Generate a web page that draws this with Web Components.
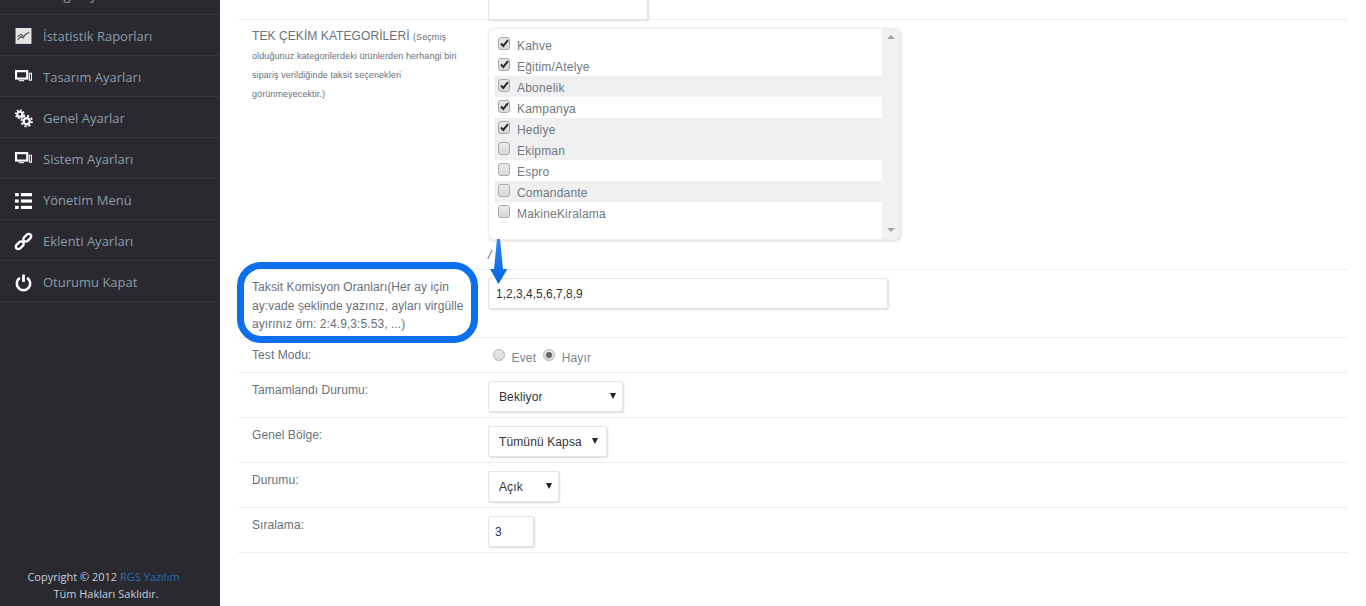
<!DOCTYPE html>
<html lang="tr">
<head>
<meta charset="utf-8">
<title>Ayarlar</title>
<style>
  html, body { margin: 0; height: 606px; overflow: hidden; background: #fff; }
</style>
</head>
<body>
<admin-page>
  <admin-sidebar slot="side">
    <nav-item label="Kargo Ayarları" icon="truck"></nav-item>
    <nav-item label="İstatistik Raporları" icon="chart"></nav-item>
    <nav-item label="Tasarım Ayarları" icon="devices"></nav-item>
    <nav-item label="Genel Ayarlar" icon="gears"></nav-item>
    <nav-item label="Sistem Ayarları" icon="devices"></nav-item>
    <nav-item label="Yönetim Menü" icon="list"></nav-item>
    <nav-item label="Eklenti Ayarları" icon="link"></nav-item>
    <nav-item label="Oturumu Kapat" icon="power"></nav-item>
  </admin-sidebar>

  <form-row style="height:45px">
    <text-field style="width:160px;margin-top:7px"></text-field>
  </form-row>

  <form-row style="height:249px">
    <span slot="label" style="display:block;line-height:19px">TEK ÇEKİM KATEGORİLERİ <small style="font-size:9px;line-height:18px;letter-spacing:.01em">(Seçmiş olduğunuz kategorilerdeki ürünlerden herhangi biri sipariş verildiğinde taksit seçenekleri görünmeyecektir.)</small></span>
    <check-list>
      <check-item checked>Kahve</check-item>
      <check-item checked>Eğitim/Atelye</check-item>
      <check-item checked odd>Abonelik</check-item>
      <check-item checked>Kampanya</check-item>
      <check-item checked odd>Hediye</check-item>
      <check-item odd>Ekipman</check-item>
      <check-item>Espro</check-item>
      <check-item odd>Comandante</check-item>
      <check-item>MakineKiralama</check-item>
    </check-list>
    <div style="font:italic 12px 'Liberation Sans',Arial,sans-serif;color:#666;margin-top:8px">/</div>
  </form-row>

  <form-row style="height:67px">
    <span slot="label" style="display:block;line-height:18.5px;margin-top:1px">Taksit Komisyon Oranları(Her ay için ay:vade şeklinde yazınız, ayları virgülle ayırınız örn: 2:4.9,3:5.53, ...)</span>
    <text-field style="width:400px">1,2,3,4,5,6,7,8,9</text-field>
  </form-row>

  <form-row style="height:34px" tight>
    <span slot="label">Test Modu:</span>
    <radio-group>
      <radio-option>Evet</radio-option>
      <radio-option checked>Hayır</radio-option>
    </radio-group>
  </form-row>

  <form-row style="height:44px">
    <span slot="label">Tamamlandı Durumu:</span>
    <select-field style="width:135px">Bekliyor</select-field>
  </form-row>

  <form-row style="height:44px">
    <span slot="label">Genel Bölge:</span>
    <select-field style="width:119px" arrow-right="8">Tümünü Kapsa</select-field>
  </form-row>

  <form-row style="height:44px">
    <span slot="label">Durumu:</span>
    <select-field style="width:71px">Açık</select-field>
  </form-row>

  <form-row style="height:44px">
    <span slot="label">Sıralama:</span>
    <text-field style="width:46px;color:#1c2f66;padding-left:6px">3</text-field>
  </form-row>

  <!-- annotation drawn over the screenshot -->
  <call-out slot="overlay"></call-out>
</admin-page>

<script>
const ICONS = {
  truck: `<rect x="0" y="-13" width="16" height="16" fill="#fff"/><circle cx="11" cy="1" r="2" fill="#2a2a31"/>`,
  chart: `<rect x="0.5" y="0" width="15" height="15" fill="#e4e4e4"/><path d="M2.5 11l3-3 2 1.5 2.5-3.5 3.5-2M2.5 8l3-2 2.5 2 2-2.5 3-1" fill="none" stroke="#55555a" stroke-width="1"/>`,
  devices: `<rect x="1" y="2" width="10.5" height="7" fill="none" stroke="#fff" stroke-width="2"/><rect x="3.5" y="10.5" width="5" height="1" fill="#fff"/><rect x="13.5" y="4" width="2" height="6.5" fill="none" stroke="#fff" stroke-width="1"/>`,
  gears: `<circle cx="4.5" cy="4" r="2.4" fill="none" stroke="#fff" stroke-width="2"/><circle cx="4.5" cy="4" r="4" fill="none" stroke="#fff" stroke-width="1.4" stroke-dasharray="1.6 1.5"/><circle cx="11" cy="10.5" r="2.9" fill="none" stroke="#fff" stroke-width="2.2"/><circle cx="11" cy="10.5" r="5" fill="none" stroke="#fff" stroke-width="1.6" stroke-dasharray="2 1.9"/>`,
  list: `<g fill="#fff"><rect x="0" y="1" width="3.5" height="3"/><rect x="5.5" y="1" width="10.5" height="3"/><rect x="0" y="7" width="3.5" height="3"/><rect x="5.5" y="7" width="10.5" height="3"/><rect x="0" y="13" width="3.5" height="3"/><rect x="5.5" y="13" width="10.5" height="3"/></g>`,
  link: `<g fill="none" stroke="#fff" stroke-width="2.2"><rect x="-5" y="-2.4" width="8.5" height="4.8" rx="2.4" transform="translate(5 11) rotate(-45)"/><rect x="-3.5" y="-2.4" width="8.5" height="4.8" rx="2.4" transform="translate(11 5) rotate(-45)"/></g>`,
  power: `<path d="M4.6 3.6a6.3 6.3 0 1 0 6.8 0" fill="none" stroke="#fff" stroke-width="2.4"/><path d="M8 0.5v7" stroke="#fff" stroke-width="2.6"/>`
};

class AdminPage extends HTMLElement {
  constructor() {
    super();
    this.attachShadow({ mode: 'open' }).innerHTML = `
      <style>
        :host { display: flex; position: relative; height: 632px; margin-top: -26px; font-family: "Liberation Sans", Arial, sans-serif; }
        #side { flex: 0 0 220px; display: flex; }
        #main { flex: 1; padding: 0 19px 0 18px; }
      </style>
      <div id="side"><slot name="side"></slot></div>
      <div id="main"><slot></slot></div>
      <slot name="overlay"></slot>`;
  }
}

class AdminSidebar extends HTMLElement {
  constructor() {
    super();
    this.attachShadow({ mode: 'open' }).innerHTML = `
      <style>
        :host { flex: 1; display: flex; flex-direction: column; background: #29292f; font-family: "Open Sans", sans-serif; }
        footer { margin-top: auto; padding: 0 11px 4px 0; text-align: center; font-size: 11px; line-height: 17px; color: #c3d0dc; }
        a { color: #2a6cb3; text-decoration: none; }
        .second { padding-left: 3px; }
        .first { padding-right: 2px; }
      </style>
      <slot></slot>
      <footer>
        <div class="first">Copyright © 2012 <a>RGS Yazılım</a></div>
        <div class="second">Tüm Hakları Saklıdır.</div>
      </footer>`;
  }
}

class NavItem extends HTMLElement {
  constructor() {
    super();
    const icon = ICONS[this.getAttribute('icon')] || '';
    this.attachShadow({ mode: 'open' }).innerHTML = `
      <style>
        :host { display: flex; align-items: center; gap: 11px; height: 38px; padding: 2px 0 0 15px; border-bottom: 1px solid #35353b; color: #8c9cab; font-size: 13px; }
        svg { width: 17px; height: 17px; flex: none; overflow: visible; }
      </style>
      <svg viewBox="0 0 16 16">${icon}</svg>
      <span>${this.getAttribute('label')}</span>`;
  }
}

class FormRow extends HTMLElement {
  constructor() {
    super();
    this.attachShadow({ mode: 'open' }).innerHTML = `
      <style>
        :host { display: grid; grid-template-columns: 236px 1fr; box-sizing: content-box; padding-left: 14px; border-bottom: 1px dotted #dcdcdc; color: #69717b; font-size: 12px; line-height: 21px; }
        #label { width: 214px; padding-top: 7px; letter-spacing: .08px; }
        #field { padding-top: 8px; }
        :host([tight]) #field { padding-top: 0; }
      </style>
      <div id="label"><slot name="label"></slot></div>
      <div id="field"><slot></slot></div>`;
  }
}

class TextField extends HTMLElement {
  constructor() {
    super();
    this.attachShadow({ mode: 'open' }).innerHTML = `
      <style>
        :host { display: block; box-sizing: border-box; height: 31px; padding: 0 7px; border: 1px solid #e4e4e4; border-radius: 2px; box-shadow: 1px 1px 2px rgba(0,0,0,.14); background: #fff; color: #333; font-size: 12px; line-height: 31px; }
      </style>
      <slot></slot>`;
  }
}

class SelectField extends HTMLElement {
  constructor() {
    super();
    const right = this.getAttribute('arrow-right') || 6;
    this.attachShadow({ mode: 'open' }).innerHTML = `
      <style>
        :host { display: flex; align-items: center; justify-content: space-between; box-sizing: border-box; height: 31px; padding: 0 ${right}px 0 10px; border: 1px solid #e4e4e4; border-radius: 2px; box-shadow: 1px 1px 2px rgba(0,0,0,.14); background: #fff; color: #333; font-size: 12px; letter-spacing: .12px; }
        span { padding-top: 2px; }
        i { width: 0; height: 0; margin-top: -1px; border: 3.5px solid transparent; border-top: 6px solid #222; border-bottom: 0; }
      </style>
      <span><slot></slot></span><i></i>`;
  }
}

class CheckList extends HTMLElement {
  constructor() {
    super();
    this.attachShadow({ mode: 'open' }).innerHTML = `
      <style>
        :host { display: flex; box-sizing: border-box; width: 412px; height: 212px; border: 1px solid #eee; border-radius: 5px; box-shadow: 1px 1px 3px rgba(0,0,0,.16); overflow: hidden; background: #fff; }
        #items { flex: 1; padding: 5px 0 0 5px; }
        #bar { flex: 0 0 17px; display: flex; flex-direction: column; justify-content: space-between; align-items: center; padding: 6px 0 7px; background: #f1f1f1; }
        .up, .down { width: 0; height: 0; border: 4px solid transparent; }
        .up { border-bottom: 4px solid #a3a3a3; border-top: 0; }
        .down { border-top: 4px solid #a3a3a3; border-bottom: 0; }
      </style>
      <div id="items"><slot></slot></div>
      <div id="bar"><div class="up"></div><div class="down"></div></div>`;
  }
}

class CheckItem extends HTMLElement {
  constructor() {
    super();
    this.attachShadow({ mode: 'open' }).innerHTML = `
      <style>
        :host { display: flex; height: 21px; padding-left: 4px; color: #6f7883; font-size: 12px; letter-spacing: .2px; line-height: 25px; }
        :host([odd]) { background: #f0f0f0; }
        #box { position: relative; box-sizing: border-box; flex: none; width: 12px; height: 13px; margin: 3px 7px 0 0; border: 1px solid #a9a9a9; border-radius: 3px; background: linear-gradient(#e9e9e9, #d8d8d8); }
        svg { display: none; position: absolute; left: 0; top: 0; width: 11px; height: 11px; }
        :host([checked]) svg { display: block; }
      </style>
      <div id="box"><svg viewBox="0 0 11 11"><path d="M2 5.500l2.3 2.500L9 2.200" fill="none" stroke="#2a2a2a" stroke-width="2"/></svg></div>
      <span><slot></slot></span>`;
  }
}

class RadioGroup extends HTMLElement {
  constructor() {
    super();
    this.attachShadow({ mode: 'open' }).innerHTML = `
      <style>:host { display: flex; gap: 7px; padding: 9px 0 0 5px; }</style>
      <slot></slot>`;
  }
}

class RadioOption extends HTMLElement {
  constructor() {
    super();
    this.attachShadow({ mode: 'open' }).innerHTML = `
      <style>
        :host { display: flex; gap: 6.5px; color: #7a8794; font-size: 12px; letter-spacing: .15px; line-height: 23px; }
        #dot { position: relative; flex: none; box-sizing: border-box; width: 12px; height: 12px; margin-top: 2px; border: 1px solid #b4b4b4; border-radius: 50%; background: linear-gradient(#e6e6e6, #d9d9d9); }
        :host([checked]) #dot::after { content: ""; position: absolute; left: 2px; top: 2px; width: 6px; height: 6px; border-radius: 50%; background: #666; }
      </style>
      <div id="dot"></div>
      <span><slot></slot></span>`;
  }
}

class CallOut extends HTMLElement {
  constructor() {
    super();
    this.attachShadow({ mode: 'open' }).innerHTML = `
      <style>
        :host { display: contents; }
        #ring { position: absolute; left: 237px; top: 288px; width: 241px; height: 81px; box-sizing: border-box; border: 7px solid #0b6fee; border-radius: 24px; }
        svg { position: absolute; left: 489px; top: 265px; width: 20px; height: 47px; }
      </style>
      <div id="ring"></div>
      <svg viewBox="0 0 20 47">
        <defs><linearGradient id="g" x1="0" y1="0" x2="0" y2="1"><stop offset="0" stop-color="#2a86f5"/><stop offset="1" stop-color="#0a63e6"/></linearGradient></defs>
        <path d="M8 0h3l3 30h4.500L9.500 45 1 30h4z" fill="url(#g)"/>
      </svg>`;
  }
}

customElements.define('admin-page', AdminPage);
customElements.define('admin-sidebar', AdminSidebar);
customElements.define('nav-item', NavItem);
customElements.define('form-row', FormRow);
customElements.define('text-field', TextField);
customElements.define('select-field', SelectField);
customElements.define('check-list', CheckList);
customElements.define('check-item', CheckItem);
customElements.define('radio-group', RadioGroup);
customElements.define('radio-option', RadioOption);
customElements.define('call-out', CallOut);
</script>
</body>
</html>
